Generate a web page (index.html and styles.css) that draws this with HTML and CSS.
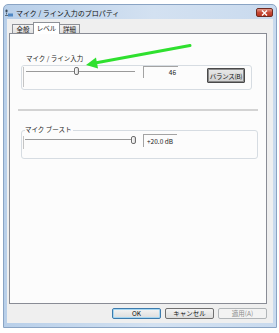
FILE: index.html
```html
<!DOCTYPE html>
<html lang="ja">
<head>
<meta charset="utf-8">
<title>マイク / ライン入力のプロパティ</title>
<link rel="stylesheet" href="styles.css">
</head>
<body>
<div class="window">
  <div class="titlebar">
    <svg class="app-icon" width="8" height="8" viewBox="0 0 8 8">
      <rect x="0.5" y="0.5" width="2" height="3" rx="1" fill="#3a4a5a"/>
      <path d="M1.5 4 L1.5 5.5 M0 6.5 L4 6.5" stroke="#5b6b7b" stroke-width="1"/>
      <rect x="3" y="4.5" width="5" height="3" fill="#4f87c4"/>
    </svg>
    <span class="title">マイク / ライン入力のプロパティ</span>
    <div class="close">
      <svg width="7" height="6" viewBox="0 0 7 6"><path d="M1 0.5 L6 5.5 M6 0.5 L1 5.5" stroke="#fff" stroke-width="1.4"/></svg>
    </div>
  </div>
  <div class="client">
    <div class="tabs">
      <div class="tab t1">全般</div>
      <div class="tab t2 active">レベル</div>
      <div class="tab t3">詳細</div>
    </div>
    <div class="panel">
      <div class="glabel g1-label">マイク / ライン入力</div>
      <div class="gbox g1-box">
        <div class="slider s1"><div class="thumb" style="margin-left:48px"></div></div>
        <div class="value v1">46</div>
        <button class="btn balance">バランス(B)</button>
      </div>
      <div class="sep"></div>
      <div class="glabel g2-label">マイク ブースト</div>
      <div class="gbox g2-box">
        <div class="slider s2"><div class="thumb" style="margin-left:106px"></div></div>
        <div class="value v2">+20.0 dB</div>
      </div>
    </div>
    <div class="buttons">
      <button class="btn dlg ok">OK</button>
      <button class="btn dlg">キャンセル</button>
      <button class="btn dlg disabled">適用(A)</button>
    </div>
  </div>
</div>
<svg class="arrow" width="279" height="333" viewBox="0 0 279 333">
  <line x1="95" y1="63" x2="190" y2="45.5" stroke="#2fe02f" stroke-width="3" stroke-linecap="round"/>
  <polygon points="86,65 98,68.5 96,57.5" fill="#2fe02f"/>
</svg>
</body>
</html>
```

FILE: styles.css
```css
* { box-sizing: border-box; }
html, body { margin: 0; padding: 0; }
body {
  width: 279px;
  height: 333px;
  background: #ffffff;
  font-family: "Noto Sans CJK JP", "Noto Sans", sans-serif;
  font-size: 6.5px;
  color: #1a1a1a;
  position: relative;
  overflow: hidden;
}
.window {
  margin: 4px 0 0 3px;
  width: 274px;
  height: 324px;
  border: 1px solid #8aa4c4;
  border-radius: 5px 5px 0 0;
  background: linear-gradient(to right, #b8cfe9, #d3e1f1 55%, #c9daee);
  padding: 0 3px 4px 3px;
  display: flex;
  flex-direction: column;
}
.titlebar {
  height: 14px;
  flex: none;
  display: flex;
  align-items: center;
  padding-top: 2px;
}
.app-icon { margin-left: -2px; flex: none; }
.title {
  margin-left: 3px;
  font-size: 7px;
  line-height: 9px;
  color: #101010;
  flex: 1;
  white-space: nowrap;
}
.close {
  width: 17px;
  height: 9px;
  margin-right: 0px;
  margin-top: -1px;
  border: 1px solid #6e2b22;
  border-radius: 2px;
  background: linear-gradient(#e49a8a, #c74a38 50%, #b8341f);
  display: flex;
  align-items: center;
  justify-content: center;
}
.client {
  flex: 1;
  background: #efefef;
  display: flex;
  flex-direction: column;
}
.tabs {
  margin: 4px 0 -1px 5px;
  height: 11px;
  display: flex;
  align-items: flex-end;
}
.tab {
  height: 10px;
  border: 1px solid #8e9197;
  border-bottom: none;
  background: linear-gradient(#f4f4f4, #dedede);
  font-size: 6.5px;
  line-height: 9px;
  text-align: center;
  white-space: nowrap;
}
.t1 { width: 22px; }
.t2 { width: 27px; }
.t3 { width: 21px; }
.tab.active {
  height: 12px;
  margin: 0 -1px;
  background: #ffffff;
  position: relative;
  z-index: 1;
  line-height: 10px;
}
.panel {
  margin-left: 2px;
  width: 258px;
  height: 271px;
  border: 1px solid #898c95;
  background: #fcfcfc;
  flex: none;
}
.glabel {
  line-height: 9px;
  width: fit-content;
  white-space: nowrap;
}
.g1-label { margin: 20px 0 0 16px; }
.g2-label {
  margin: 14px 0 0 15px;
  line-height: 8px;
  padding-right: 1px;
  background: #fcfcfc;
  position: relative;
  z-index: 1;
}
.gbox {
  border: 1px solid #d6dce2;
  border-radius: 3px;
  display: flex;
  align-items: flex-start;
}
.g1-box { margin: 2px 0 0 11px; width: 231px; height: 25px; }
.g2-box { margin: -3px 0 0 11px; width: 237px; height: 29px; }
.slider {
  display: flex;
  align-items: flex-start;
  border-left: 1px solid #c4c4c4;
  background-image: linear-gradient(#9a9a9a, #9a9a9a);
  background-repeat: no-repeat;
  background-size: calc(100% - 3px) 1px;
  flex: none;
}
.s1 {
  margin: 1px 0 0 1px;
  width: 113px;
  height: 20px;
  padding-left: 2px;
  background-position: 2px 4px;
}
.s2 {
  margin: 5px 0 0 1px;
  width: 114px;
  height: 13px;
  padding-left: 1px;
  background-position: 1px 3px;
}
.thumb {
  width: 5px;
  height: 8px;
  border: 1px solid #6f6f6f;
  border-radius: 2px;
  background: linear-gradient(to right, #ffffff, #d8d8d8);
  flex: none;
}
.value {
  border-top: 1px solid #a3a3a3;
  border-left: 1px solid #a3a3a3;
  line-height: 11px;
  white-space: nowrap;
  flex: none;
}
.v1 {
  margin-left: 7px;
  width: 35px;
  height: 12px;
  text-align: right;
  padding-right: 2px;
}
.v2 {
  margin: 3px 0 0 6px;
  width: 34px;
  height: 13px;
  padding-left: 3px;
  line-height: 13px;
}
.btn {
  font-family: "Noto Sans CJK JP", "Noto Sans", sans-serif;
  font-size: 6.5px;
  color: #111;
  padding: 0;
  margin: 0;
  white-space: nowrap;
  text-align: center;
}
.balance {
  margin: 2px 0 0 29px;
  width: 38px;
  height: 15px;
  border: 1px solid #4a4a4a;
  border-radius: 1px;
  box-shadow: inset 0 0 0 1px #8a8a8a;
  background: linear-gradient(#e9e9e9, #cfcfcf);
  letter-spacing: -0.3px;
  line-height: 12px;
}
.sep {
  margin: 19px 0 0 8px;
  width: 240px;
  height: 2px;
  background: #d3d3d3;
}
.buttons {
  margin-top: 4px;
  display: flex;
  justify-content: flex-end;
  gap: 4px;
  padding-right: 6px;
}
.dlg {
  width: 49px;
  height: 11px;
  line-height: 9px;
  border: 1px solid #707070;
  border-radius: 2px;
  background: linear-gradient(#f3f3f3, #dddddd);
}
.ok {
  border-color: #3d7bad;
  box-shadow: inset 0 0 0 1px #a6d6f1;
}
.disabled {
  border-color: #b1b5b8;
  background: #f3f3f3;
  color: #8c8c8c;
}
.arrow {
  position: absolute;
  left: 0;
  top: 0;
  pointer-events: none;
}
```
